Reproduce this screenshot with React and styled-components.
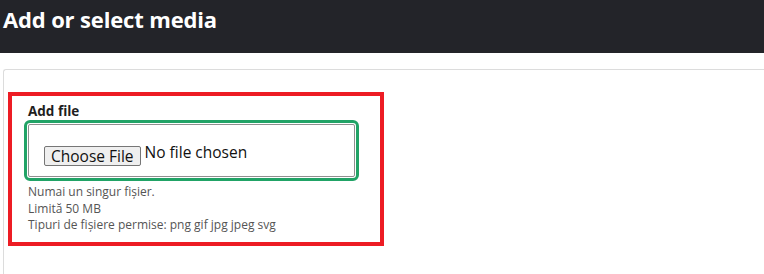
import React from 'react';
import styled, { createGlobalStyle } from 'styled-components';

const GlobalStyle = createGlobalStyle`
  html, body {
    margin: 0;
    padding: 0;
    background: #ffffff;
  }
  body {
    font-family: "Open Sans", "Noto Sans", sans-serif;
    color: #222;
  }
`;

const StyledPage = styled.div`
  width: 764px;
  height: 274px;
  overflow: hidden;
  display: flex;
  flex-direction: column;
`;

const StyledHeader = styled.header`
  height: 53px;
  flex-shrink: 0;
  background: #232429;
  padding: 4px 0 0 3px;
  box-sizing: border-box;
`;

const StyledTitle = styled.h1`
  margin: 0;
  font-size: 22px;
  line-height: 30px;
  font-weight: 700;
  color: #ffffff;
  letter-spacing: -0.15px;
`;

const StyledMain = styled.main`
  flex: 1;
  padding: 16px 0 0 3px;
`;

const StyledPanel = styled.section`
  height: 100%;
  border-top: 1px solid #dcdcdc;
  border-left: 1px solid #dcdcdc;
  border-top-left-radius: 3px;
  padding: 22px 0 0 4px;
  box-sizing: border-box;
`;

const StyledField = styled.div`
  width: 376px;
  border: 4px solid #ed1c24;
  box-sizing: border-box;
  padding: 5px 16px 8px;
`;

const StyledLabel = styled.label`
  display: block;
  font-size: 13.5px;
  font-weight: 700;
  line-height: 20px;
  color: #1e1e1e;
  margin-bottom: 3px;
`;

const StyledFileBox = styled.div`
  width: 327px;
  height: 53px;
  box-sizing: border-box;
  border: 1px solid #8f8f8f;
  border-radius: 2px;
  outline: 3px solid #21a366;
  outline-offset: 1px;
  display: flex;
  align-items: flex-start;
  padding: 21px 15px 0;
  font-size: 15.5px;
`;

const StyledButton = styled.span`
  height: 20px;
  box-sizing: border-box;
  padding: 0 6px;
  background: #efefef;
  border: 1px solid #767676;
  border-radius: 2px;
  line-height: 18px;
  color: #111;
  white-space: nowrap;
`;

const StyledFileName = styled.span`
  margin: -4px 0 0 4px;
  line-height: 20px;
  color: #111;
  white-space: nowrap;
`;

const StyledHelp = styled.div`
  margin-top: 7px;
  font-size: 12px;
  line-height: 16.5px;
  color: #555;
`;

const StyledHelpLine = styled.div`
  white-space: nowrap;
`;

const App = () => (
  <>
    <GlobalStyle />
    <StyledPage>
      <StyledHeader>
        <StyledTitle>Add or select media</StyledTitle>
      </StyledHeader>
      <StyledMain>
        <StyledPanel>
          <StyledField>
            <StyledLabel>Add file</StyledLabel>
            <StyledFileBox>
              <StyledButton>Choose File</StyledButton>
              <StyledFileName>No file chosen</StyledFileName>
            </StyledFileBox>
            <StyledHelp>
              <StyledHelpLine>Numai un singur fișier.</StyledHelpLine>
              <StyledHelpLine>Limită 50 MB</StyledHelpLine>
              <StyledHelpLine>Tipuri de fișiere permise: png gif jpg jpeg svg</StyledHelpLine>
            </StyledHelp>
          </StyledField>
        </StyledPanel>
      </StyledMain>
    </StyledPage>
  </>
);

export default App;
